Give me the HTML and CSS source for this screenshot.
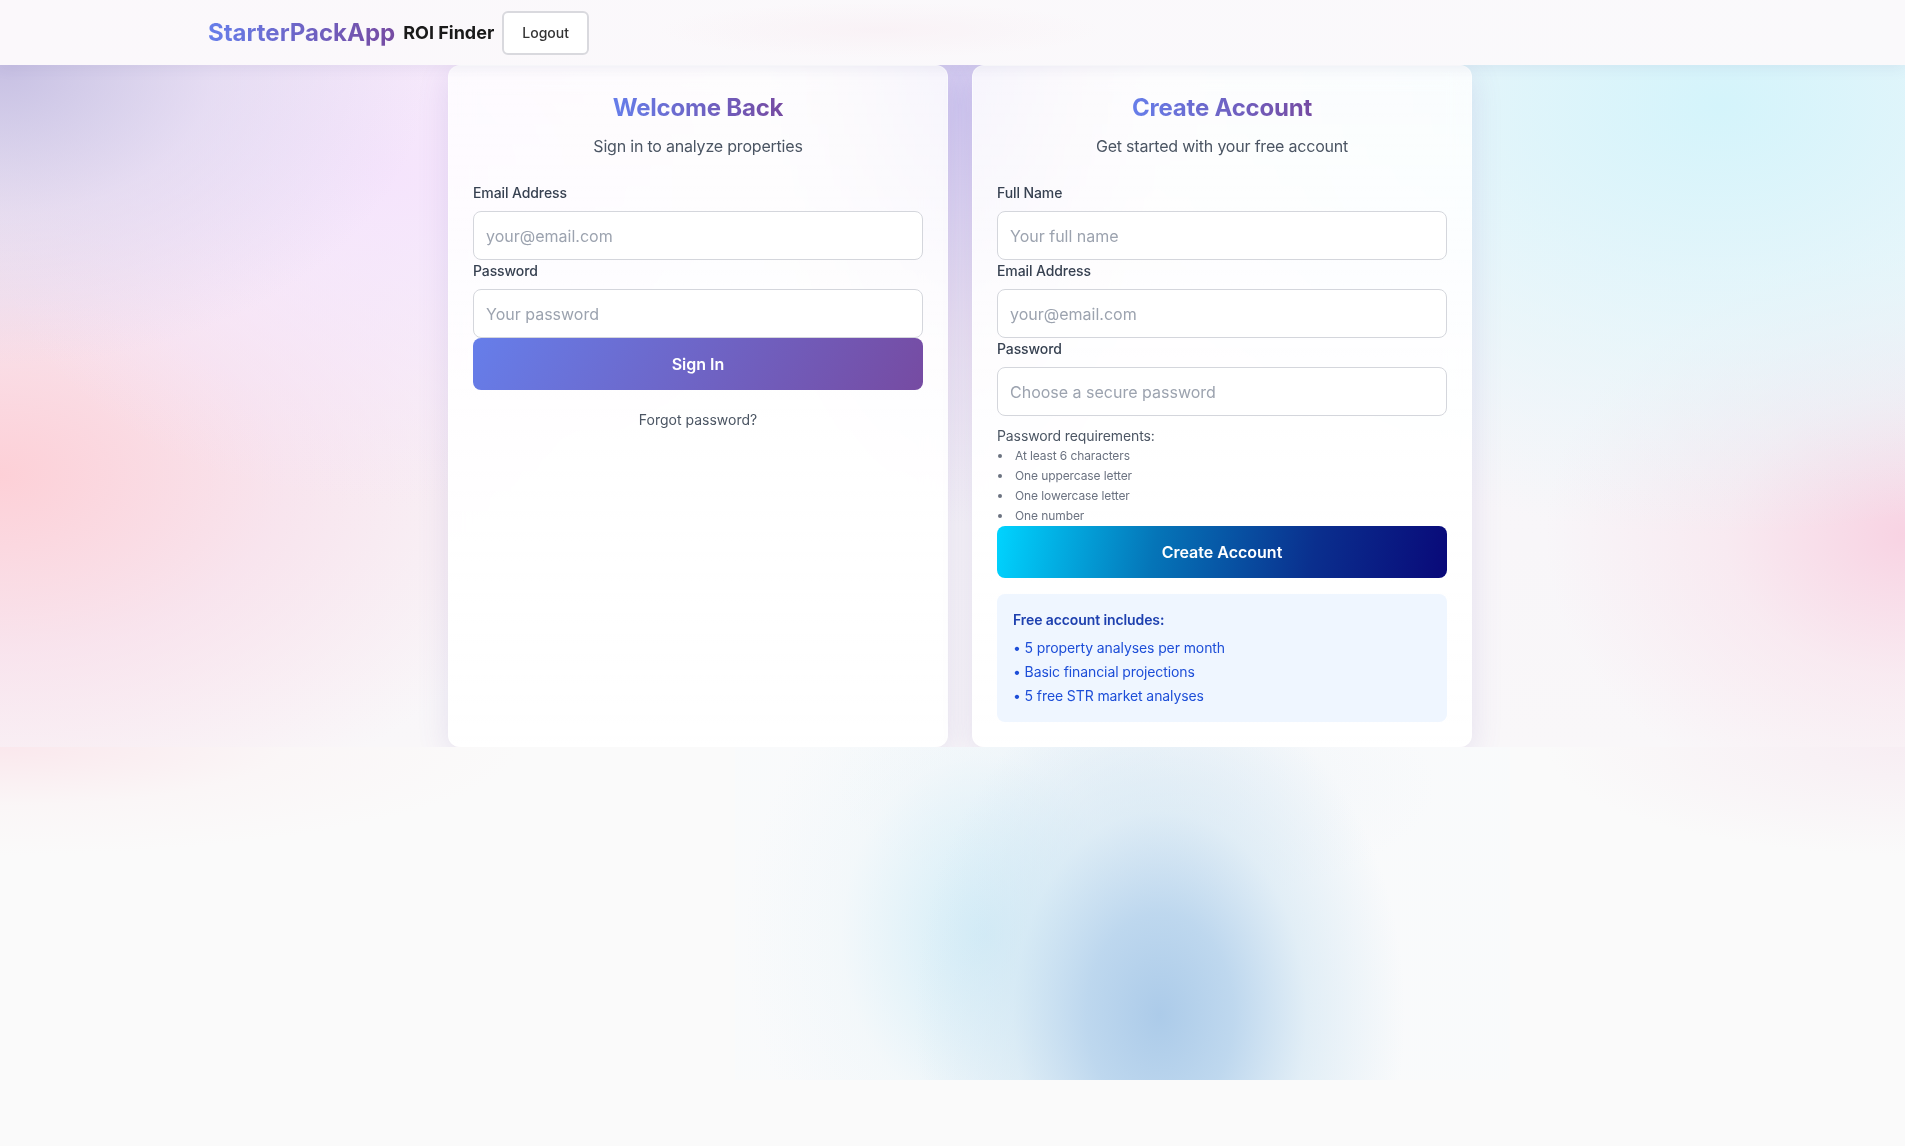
FILE: index.html
```html
<!DOCTYPE html>
<html lang="en">
<head>
<meta charset="utf-8">
<title>StarterPackApp - ROI Finder</title>
<link rel="stylesheet" href="styles.css">
</head>
<body>
<div class="page">
  <header class="topbar">
    <div class="topbar-inner">
      <span class="brand">StarterPackApp</span>
      <span class="product">ROI Finder</span>
      <button class="logout" type="button">Logout</button>
    </div>
  </header>

  <section class="auth">
    <div class="cards">
      <div class="card">
        <div class="card-head">
          <h2 class="card-title">Welcome Back</h2>
          <p class="card-sub">Sign in to analyze properties</p>
        </div>
        <label class="field-label">Email Address</label>
        <input class="field" type="email" placeholder="your@email.com">
        <label class="field-label">Password</label>
        <input class="field" type="password" placeholder="Your password">
        <button class="btn btn-signin" type="button">Sign In</button>
        <p class="forgot">Forgot password?</p>
      </div>

      <div class="card">
        <div class="card-head">
          <h2 class="card-title">Create Account</h2>
          <p class="card-sub">Get started with your free account</p>
        </div>
        <label class="field-label">Full Name</label>
        <input class="field" type="text" placeholder="Your full name">
        <label class="field-label">Email Address</label>
        <input class="field" type="email" placeholder="your@email.com">
        <label class="field-label">Password</label>
        <input class="field" type="password" placeholder="Choose a secure password">
        <p class="req-title">Password requirements:</p>
        <ul class="req-list">
          <li>At least 6 characters</li>
          <li>One uppercase letter</li>
          <li>One lowercase letter</li>
          <li>One number</li>
        </ul>
        <button class="btn btn-create" type="button">Create Account</button>
        <div class="perks">
          <p class="perks-title">Free account includes:</p>
          <ul class="perks-list">
            <li>• 5 property analyses per month</li>
            <li>• Basic financial projections</li>
            <li>• 5 free STR market analyses</li>
          </ul>
        </div>
      </div>
    </div>
  </section>
</div>
</body>
</html>
```

FILE: styles.css
```css
* { box-sizing: border-box; }

html, body {
  margin: 0;
  padding: 0;
}

body {
  font-family: "Inter", "Noto Sans", sans-serif;
  color: #1f2937;
  background: #fafafa;
}

.page {
  min-height: 100vh;
  background:
    radial-gradient(ellipse 245px 340px at 425px 270px, rgba(172,203,233,1) 0%, rgba(184,212,237,0.9) 30%, rgba(210,230,243,0.6) 60%, rgba(246,248,250,0) 100%) 735px 745px / 775px 335px no-repeat,
    radial-gradient(ellipse 240px 300px at 250px 190px, rgba(200,233,246,0.8) 0%, rgba(232,244,249,0.35) 60%, rgba(250,250,250,0) 100%) 735px 745px / 775px 335px no-repeat,
    radial-gradient(ellipse 300px 120px at 400px 40px, rgba(236,242,248,0.7) 0%, rgba(250,250,250,0) 100%) 735px 745px / 775px 335px no-repeat,
    linear-gradient(rgba(248,250,252,0.6), rgba(248,250,252,0.6)) 735px 745px / 775px 335px no-repeat,
    radial-gradient(ellipse 520px 110px at 0px 745px, rgba(250,228,234,0.85) 0%, rgba(250,240,242,0.4) 55%, rgba(250,250,250,0) 100%),
    radial-gradient(ellipse 360px 110px at 1905px 745px, rgba(246,232,240,0.7) 0%, rgba(250,250,250,0) 100%),
    #fafafa;
}

/* ---------- header ---------- */
.topbar {
  position: relative;
  z-index: 2;
  height: 65px;
  padding-left: 15px;
  background:
    radial-gradient(ellipse 220px 28px at 880px 30px, rgba(248,238,243,0.6), rgba(251,248,251,0) 100%),
    linear-gradient(90deg, #fbf8fb, #faf9fb);
  box-shadow: 0 3px 14px rgba(70, 60, 130, 0.08);
}

.topbar-inner {
  max-width: 1504px;
  height: 100%;
  margin: 0 auto;
  display: flex;
  align-items: center;
  gap: 8px;
}

.brand {
  font-size: 24px;
  font-weight: 700;
  background: linear-gradient(90deg, #667eea, #764ba2);
  -webkit-background-clip: text;
  background-clip: text;
  color: transparent;
}

.product {
  font-size: 18px;
  font-weight: 700;
  color: #1a1a1a;
}

.logout {
  height: 44px;
  padding: 0 18px;
  border: 2px solid #d9d9de;
  border-radius: 6px;
  background: #ffffff;
  font-family: inherit;
  font-size: 14px;
  font-weight: 500;
  color: #333333;
}

/* ---------- auth section ---------- */
.auth {
  position: relative;
  overflow: hidden;
  padding-left: 15px;
  background:
    radial-gradient(ellipse 430px 300px at 0px 0px, rgba(196,189,226,0.95) 0%, rgba(214,206,236,0.5) 50%, rgba(240,230,246,0) 100%),
    radial-gradient(ellipse 420px 330px at 390px 110px, rgba(245,228,252,1) 0%, rgba(245,228,252,0.5) 55%, rgba(245,228,252,0) 100%),
    radial-gradient(ellipse 560px 360px at 0px 410px, rgba(253,208,215,1) 0%, rgba(248,216,230,0.6) 50%, rgba(250,236,240,0) 100%),
    radial-gradient(ellipse 200px 420px at 960px 40px, rgba(210,202,241,1) 0%, rgba(228,216,240,0.6) 55%, rgba(236,228,243,0) 100%),
    radial-gradient(ellipse 640px 430px at 1720px 40px, rgba(212,244,251,1) 0%, rgba(222,246,251,0.6) 55%, rgba(235,248,251,0) 100%),
    radial-gradient(ellipse 360px 280px at 1905px 470px, rgba(248,211,227,1) 0%, rgba(248,222,233,0.5) 50%, rgba(248,236,242,0) 100%),
    linear-gradient(180deg, #f7f4f8 0%, #f8f6f9 70%, #f9f7f9 100%);
}

.cards {
  width: 1024px;
  margin: 0 auto;
  display: grid;
  grid-template-columns: 500px 500px;
  gap: 24px;
  align-items: stretch;
}

.card {
  display: flex;
  flex-direction: column;
  padding: 24px;
  border: 1px solid rgba(255,255,255,0.5);
  border-radius: 12px;
  background: linear-gradient(180deg, rgba(255,255,255,0.8) 0%, rgba(255,255,255,0.9) 40%, rgba(255,255,255,0.98) 100%);
  backdrop-filter: blur(12px);
  box-shadow: 0 8px 32px rgba(100, 80, 170, 0.14);
}

.card-head {
  text-align: center;
  margin-bottom: 24px;
}

.card-title {
  display: inline-block;
  margin: 0;
  font-size: 24px;
  line-height: 36px;
  font-weight: 700;
  letter-spacing: -0.2px;
  background: linear-gradient(90deg, #667eea, #764ba2);
  -webkit-background-clip: text;
  background-clip: text;
  color: transparent;
}

.card-sub {
  margin: 8px 0 0;
  font-size: 16px;
  line-height: 24px;
  color: #4b5563;
  letter-spacing: -0.2px;
}

.field-label {
  display: block;
  font-size: 14px;
  line-height: 21px;
  font-weight: 500;
  color: #374151;
  margin-bottom: 8px;
  letter-spacing: -0.1px;
}

.field {
  display: block;
  width: 100%;
  height: 49px;
  padding: 0 12px;
  border: 1px solid #d4d6dc;
  border-radius: 8px;
  background: #ffffff;
  font-family: inherit;
  font-size: 16px;
  color: #111827;
}

.field::placeholder {
  color: #9ca3af;
}

.btn {
  display: block;
  width: 100%;
  height: 52px;
  border: 0;
  border-radius: 8px;
  font-family: inherit;
  font-size: 16px;
  font-weight: 600;
  color: #ffffff;
}

.btn-signin {
  background: linear-gradient(120deg, #667eea 0%, #764ba2 100%);
}

.btn-create {
  background: linear-gradient(100deg, #00d4ff 0%, #0575b8 35%, #0a2f8e 70%, #090979 100%);
}

.forgot {
  margin: 18px 0 0;
  text-align: center;
  font-size: 14px;
  line-height: 24px;
  color: #4b5563;
}

.req-title {
  margin: 9px 0 0;
  font-size: 14px;
  line-height: 21px;
  color: #4b5563;
  letter-spacing: -0.1px;
}

.req-list {
  margin: 0;
  padding: 0;
  list-style: none;
}

.req-list li {
  display: flex;
  align-items: center;
  font-size: 12px;
  line-height: 20px;
  color: #6b7280;
  letter-spacing: -0.1px;
}

.req-list li::before {
  content: "";
  width: 4px;
  height: 4px;
  border-radius: 50%;
  background: #6b7280;
  margin: 0 13px 0 1px;
}

.perks {
  margin-top: 16px;
  padding: 16px;
  border-radius: 8px;
  background: #eff6ff;
}

.perks-title {
  margin: 0 0 8px;
  font-size: 14px;
  line-height: 20px;
  font-weight: 600;
  color: #1e40af;
  letter-spacing: -0.1px;
}

.perks-list {
  margin: 0;
  padding: 0;
  list-style: none;
  display: flex;
  flex-direction: column;
  gap: 4px;
}

.perks-list li {
  font-size: 14px;
  line-height: 20px;
  color: #1d4ed8;
  letter-spacing: -0.1px;
}
```
